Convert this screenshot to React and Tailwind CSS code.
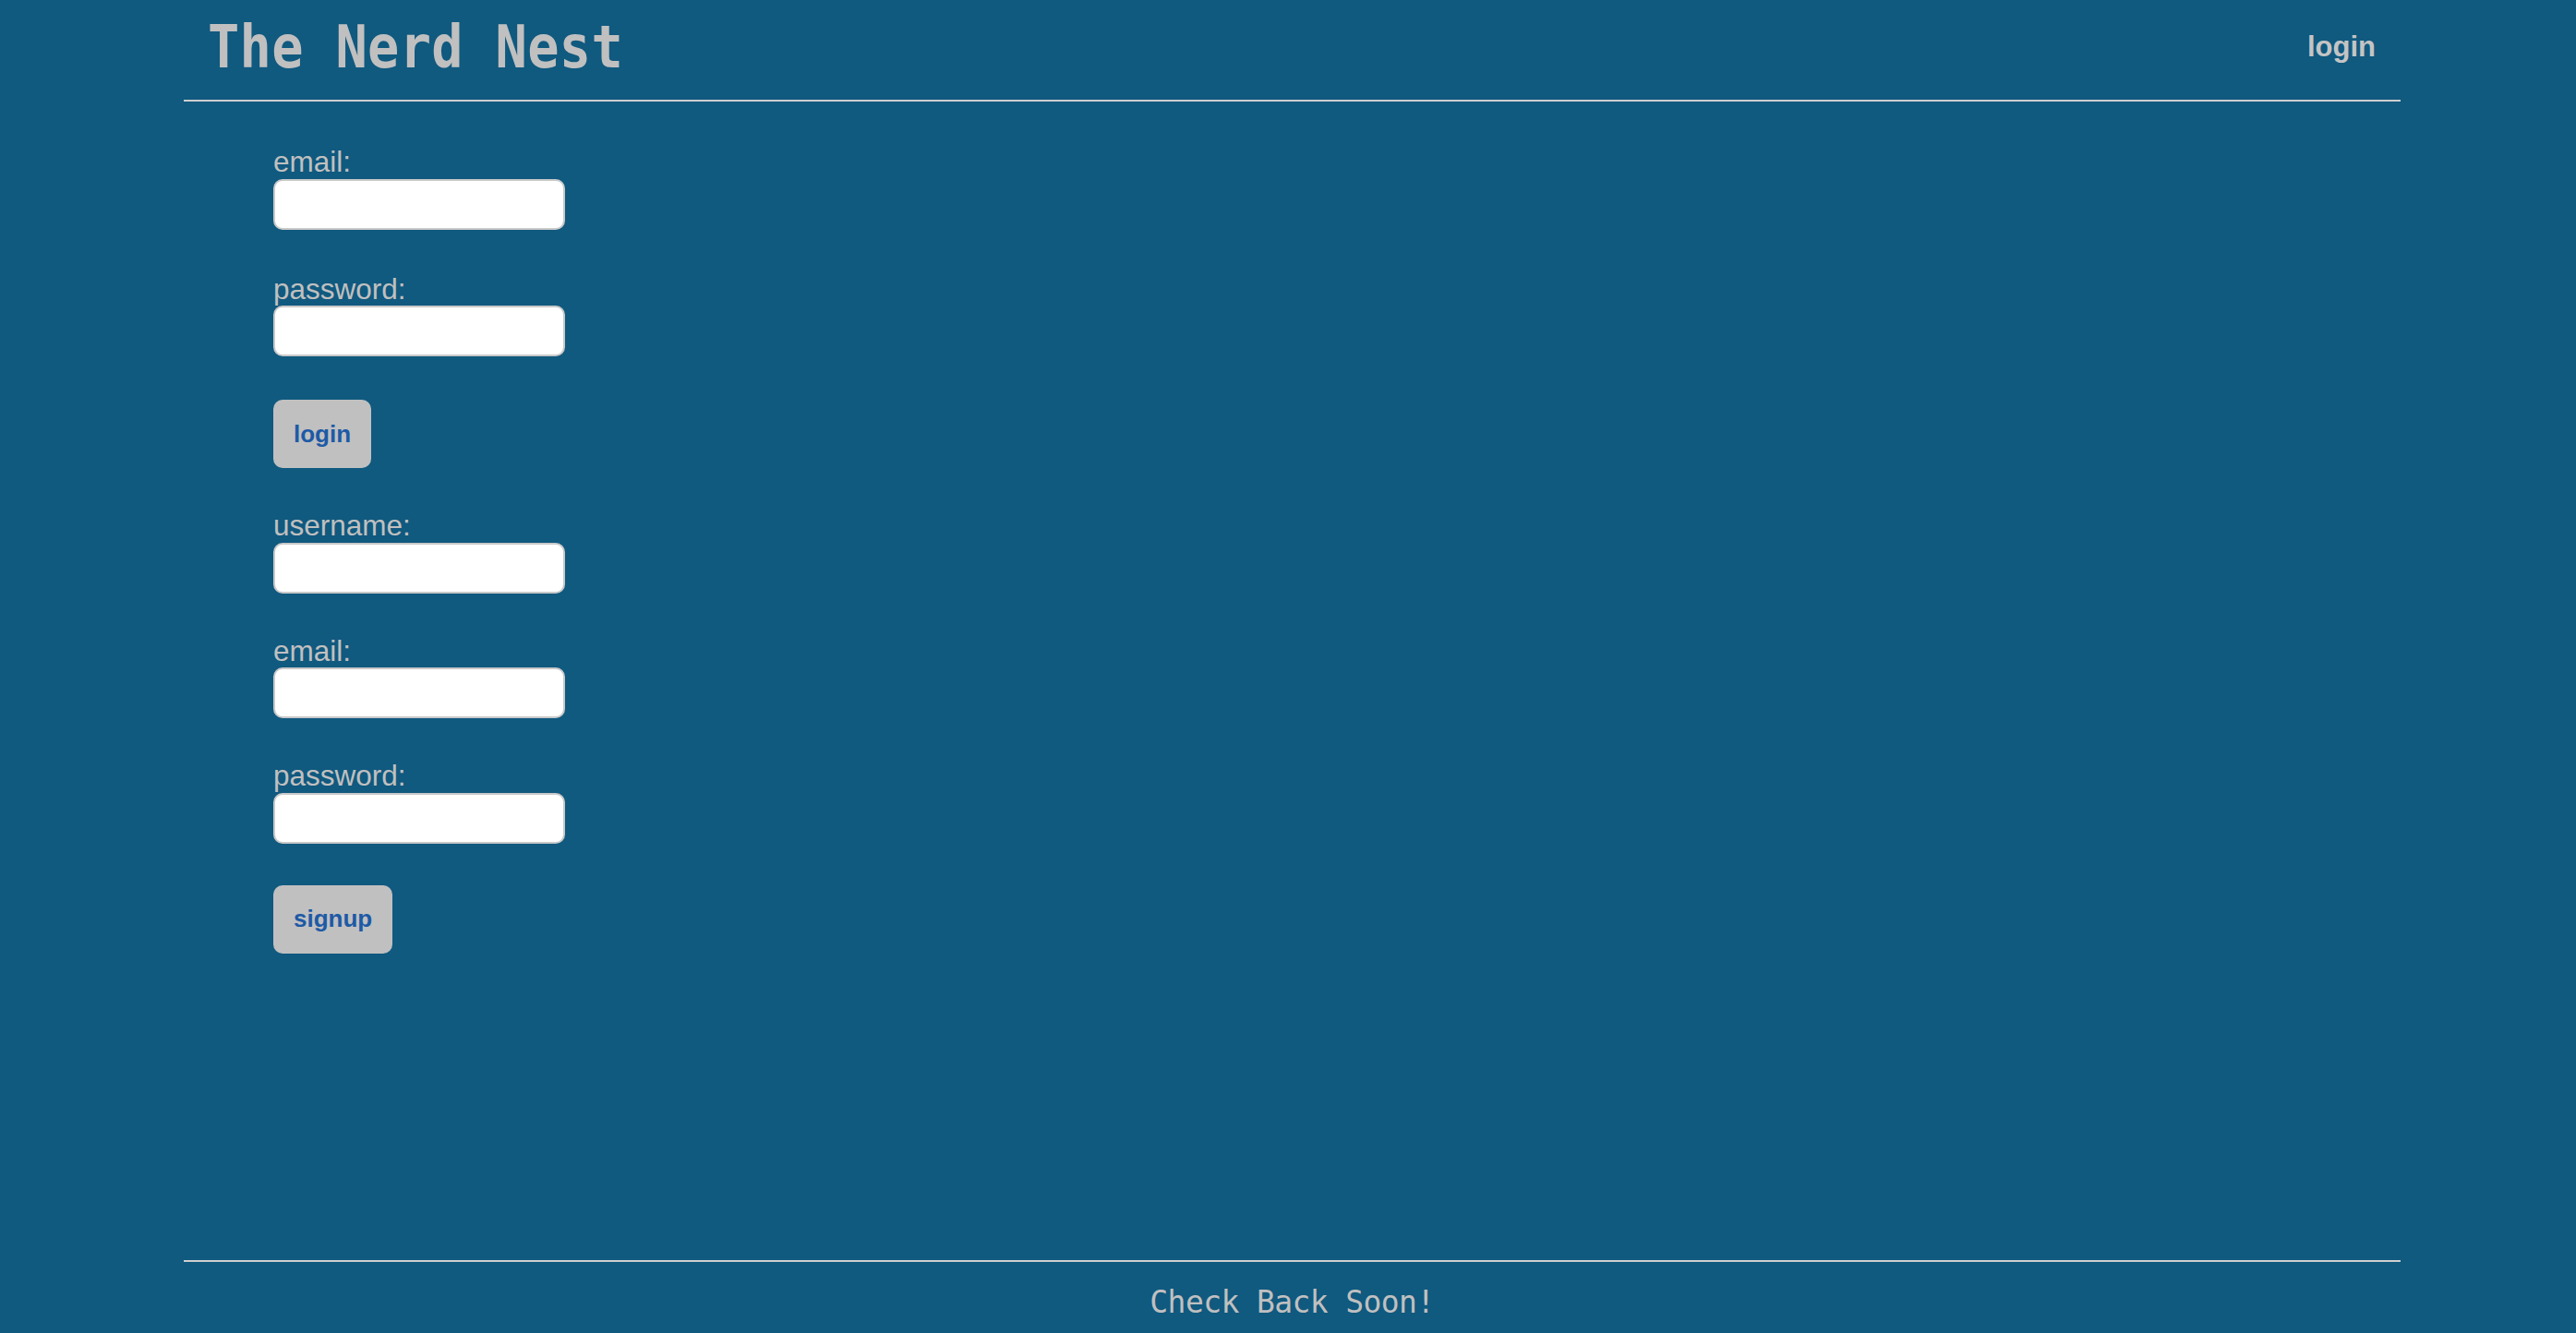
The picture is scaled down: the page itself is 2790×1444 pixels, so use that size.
import React, { useState } from "react";

const mono = { fontFamily: '"DejaVu Sans Mono", monospace' };
const sans = { fontFamily: '"Liberation Sans", Arial, sans-serif' };

function Field({ label, type = "text", value, onChange }) {
  return (
    <div>
      <label className="block text-[31.5px] leading-[1.13] text-[#c0c0c0]">{label}</label>
      <input
        type={type}
        value={value}
        onChange={(e) => onChange(e.target.value)}
        className="block w-[316px] h-[55px] bg-white border-2 border-[#c9c9c9] rounded-[10px] px-3 text-[24px] text-black outline-none"
      />
    </div>
  );
}

function SubmitButton({ children }) {
  return (
    <button
      type="submit"
      className="h-[74px] px-[22px] bg-[#c0c0c0] rounded-[10px] text-[26px] font-bold text-[#1d5aa6]"
    >
      {children}
    </button>
  );
}

export default function App() {
  const [loginEmail, setLoginEmail] = useState("");
  const [loginPassword, setLoginPassword] = useState("");
  const [username, setUsername] = useState("");
  const [signupEmail, setSignupEmail] = useState("");
  const [signupPassword, setSignupPassword] = useState("");

  return (
    <div className="min-h-screen bg-[#10597f] pl-[199px] pr-[190px] flex flex-col" style={sans}>
      {/* Header */}
      <header className="h-[110px] flex items-start justify-between border-b-2 border-[#cfcfcf] pl-[26px] pr-[27px]">
        <h1
          className="mt-[18.5px] text-[57px] leading-[57px] tracking-[0.3px] font-bold text-[#c0c0c0] origin-top scale-y-[1.12]"
          style={mono}
        >
          The Nerd Nest
        </h1>
        <a href="#" className="mt-[35px] text-[31px] leading-none font-bold text-[#c4c4c4]">
          login
        </a>
      </header>

      {/* Forms */}
      <main className="flex-1 pl-[97px] pt-[48px]">
        <form className="flex flex-col items-start gap-[47px]" onSubmit={(e) => e.preventDefault()}>
          <Field label="email:" type="email" value={loginEmail} onChange={setLoginEmail} />
          <Field label="password:" type="password" value={loginPassword} onChange={setLoginPassword} />
          <SubmitButton>login</SubmitButton>
        </form>

        <form className="mt-[45px] flex flex-col items-start gap-[45px]" onSubmit={(e) => e.preventDefault()}>
          <Field label="username:" value={username} onChange={setUsername} />
          <Field label="email:" type="email" value={signupEmail} onChange={setSignupEmail} />
          <Field label="password:" type="password" value={signupPassword} onChange={setSignupPassword} />
          <SubmitButton>signup</SubmitButton>
        </form>
      </main>

      {/* Footer */}
      <footer className="border-t-2 border-[#cfcfcf] pt-[25px] pb-[14px] text-center">
        <p className="text-[33px] leading-[38px] tracking-[-0.6px] text-[#c0c0c0]" style={mono}>
          Check Back Soon!
        </p>
      </footer>
    </div>
  );
}
